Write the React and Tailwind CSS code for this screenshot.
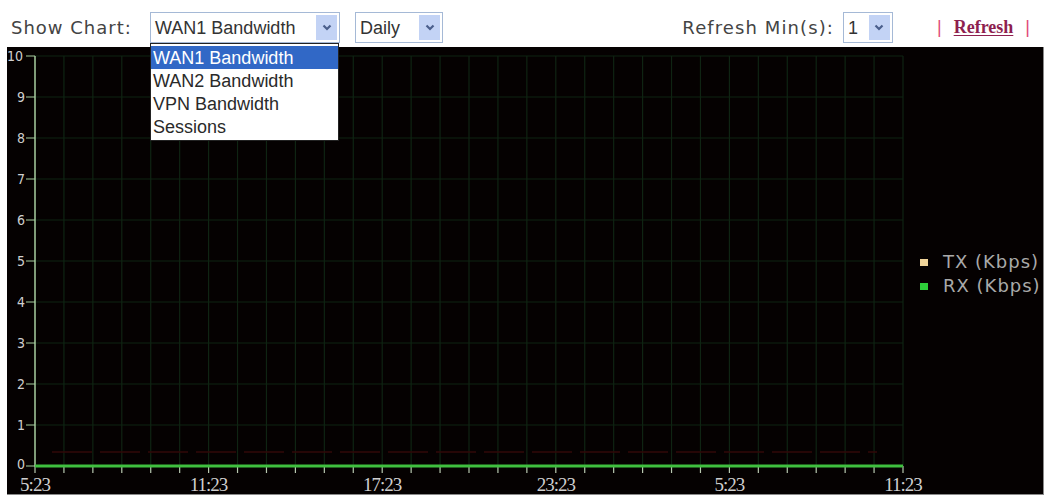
import { useState } from "react";

const chartOptions = ["WAN1 Bandwidth", "WAN2 Bandwidth", "VPN Bandwidth", "Sessions"];
const xLabels = ["5:23", "11:23", "17:23", "23:23", "5:23", "11:23"];

// plot geometry, local to the chart panel
const X0 = 28;
const X1 = 896;
const Y0 = 419;
const STEP_Y = 41;
const HOURS = 30;
const STEP_X = (X1 - X0) / HOURS;

function Chevron() {
  return (
    <svg width="10" height="7" viewBox="0 0 10 7">
      <path d="M1.5 1.5 L5 5 L8.5 1.5" fill="none" stroke="#4a5f8c" strokeWidth="2.2" />
    </svg>
  );
}

function FakeSelect({ value, className }) {
  return (
    <div className={`relative h-[31px] bg-white border border-[#a5b9d6] flex items-center ${className}`}>
      <span className="pl-[4px] text-[18px] text-[#333] leading-none" style={{ fontFamily: '"Liberation Sans", Arial, sans-serif' }}>
        {value}
      </span>
      <div className="absolute right-[2px] top-[2px] bottom-[2px] w-[21px] bg-[#c3d3f5] flex items-center justify-center">
        <Chevron />
      </div>
    </div>
  );
}

function Chart() {
  const hours = Array.from({ length: HOURS + 1 }, (_, i) => X0 + i * STEP_X);
  const values = Array.from({ length: 11 }, (_, i) => i);

  return (
    <svg width="1036" height="447" viewBox="0 0 1036 447" className="block">
      {/* grid */}
      {hours.slice(1).map((x, i) => (
        <line key={"v" + i} x1={x} y1={9} x2={x} y2={Y0} stroke="#0f2413" strokeWidth="1.2" />
      ))}
      {values.slice(1).map((v) => (
        <line key={"h" + v} x1={X0} y1={Y0 - v * STEP_Y} x2={X1} y2={Y0 - v * STEP_Y} stroke="#0f2413" strokeWidth="1.2" />
      ))}

      {/* faint tx trace */}
      <line x1={45} y1={405} x2={870} y2={405} stroke="#320909" strokeWidth="1.5" strokeDasharray="40 8" />

      {/* y axis */}
      <line x1={X0} y1={9} x2={X0} y2={Y0} stroke="#a8cfa0" strokeWidth="1.5" />
      {values.map((v) => (
        <g key={"y" + v}>
          <line x1={19} y1={Y0 - v * STEP_Y} x2={X0} y2={Y0 - v * STEP_Y} stroke="#a8cfa0" strokeWidth="1" />
          <text
            x={v === 10 ? 16 : 18}
            y={Y0 - v * STEP_Y + (v === 0 ? 3 : 5)}
            textAnchor="end"
            fontSize="14"
            fill="#cfcfcf"
            fontFamily='"DejaVu Sans Condensed", "DejaVu Sans", sans-serif'
          >
            {v}
          </text>
        </g>
      ))}

      {/* x axis */}
      {hours.map((x, i) => (
        <line key={"t" + i} x1={x} y1={Y0} x2={x} y2={Y0 + 7} stroke="#b8c8b0" strokeWidth="1.2" />
      ))}
      <line x1={X0} y1={Y0} x2={X1} y2={Y0} stroke="#3fbf3f" strokeWidth="3" />
      {xLabels.map((label, i) => (
        <text
          key={"x" + i}
          x={X0 + i * 6 * STEP_X}
          y={444}
          textAnchor="middle"
          fontSize="19"
          letterSpacing="-1"
          fill="#cfcfcf"
          fontFamily='"Liberation Serif", "Times New Roman", serif'
        >
          {label}
        </text>
      ))}

      {/* legend */}
      <rect x={913} y={212} width={8} height={7} fill="#f0d49a" />
      <text x={936} y={221} fontSize="18" fill="#a9a9a9" letterSpacing="1" fontFamily='"DejaVu Sans", Verdana, sans-serif'>
        TX (Kbps)
      </text>
      <rect x={913} y={236} width={8} height={7} fill="#2ecf3a" />
      <text x={936} y={245} fontSize="18" fill="#a9a9a9" letterSpacing="1" fontFamily='"DejaVu Sans", Verdana, sans-serif'>
        RX (Kbps)
      </text>
    </svg>
  );
}

export default function App() {
  const [chart] = useState(chartOptions[0]);
  const labelFont = { fontFamily: '"DejaVu Sans", Verdana, sans-serif' };

  return (
    <div className="relative w-[1048px] h-[498px] bg-white overflow-hidden">
      {/* toolbar */}
      <div className="h-[47px] pt-[8px] pl-[11px] pr-[18px] flex items-center">
        <span className="w-[139px] text-[18px] tracking-[1px] text-[#444]" style={labelFont}>
          Show Chart:
        </span>
        <FakeSelect value={chart} className="w-[190px]" />
        <FakeSelect value="Daily" className="w-[88px] ml-[15px]" />
        <div className="flex-1" />
        <span className="text-[18px] tracking-[1.1px] text-[#444]" style={labelFont}>
          Refresh Min(s):
        </span>
        <FakeSelect value="1" className="w-[50px] ml-[9px]" />
        <div className="ml-[44px] flex items-center gap-[12px] text-[18px]" style={{ fontFamily: '"Liberation Serif", "Times New Roman", serif' }}>
          <span className="text-[#e0487a]" style={{ fontFamily: '"Liberation Sans", Arial, sans-serif' }}>|</span>
          <a href="#" className="font-bold text-[#8e1f4f] underline underline-offset-2">Refresh</a>
          <span className="text-[#e0487a]" style={{ fontFamily: '"Liberation Sans", Arial, sans-serif' }}>|</span>
        </div>
      </div>

      {/* chart panel */}
      <div className="ml-[7px] w-[1037px] h-[448px] bg-[#050101] border-r border-b border-[#8a8a8a]">
        <Chart />
      </div>

      {/* open dropdown list */}
      <div
        className="absolute left-[150px] top-[43px] w-[189px] bg-white border border-[#222] py-[2px]"
        style={{ fontFamily: '"Liberation Sans", Arial, sans-serif' }}
      >
        {chartOptions.map((opt, i) => (
          <div
            key={opt}
            className={`h-[23px] pl-[2px] flex items-center text-[18px] leading-none ${i === 0 ? "bg-[#3168c6] text-white" : "text-[#2a2a2a]"}`}
          >
            {opt}
          </div>
        ))}
      </div>
    </div>
  );
}
